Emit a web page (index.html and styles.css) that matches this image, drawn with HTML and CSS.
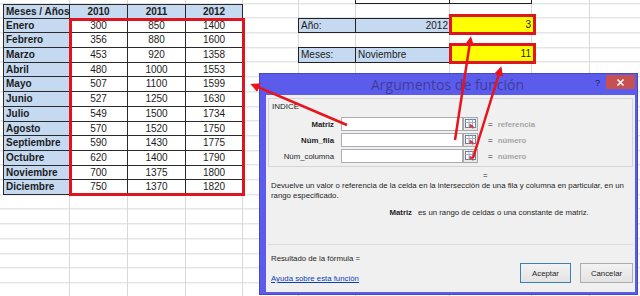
FILE: index.html
```html
<!DOCTYPE html>
<html>
<head>
<meta charset="utf-8">
<link rel="stylesheet" href="styles.css">
</head>
<body>

<div class="sheet">
  <div class="stub stub-left"></div>
  <div class="stub stub-right"></div>

  <div class="table">
    <div class="cell head first">Meses / Años</div>
    <div class="cell head">2010</div>
    <div class="cell head">2011</div>
    <div class="cell head">2012</div>

    <div class="cell month">Enero</div><div class="cell">300</div><div class="cell">850</div><div class="cell">1400</div>
    <div class="cell month">Febrero</div><div class="cell">356</div><div class="cell">880</div><div class="cell">1600</div>
    <div class="cell month">Marzo</div><div class="cell">453</div><div class="cell">920</div><div class="cell">1358</div>
    <div class="cell month">Abril</div><div class="cell">480</div><div class="cell">1000</div><div class="cell">1553</div>
    <div class="cell month">Mayo</div><div class="cell">507</div><div class="cell">1100</div><div class="cell">1599</div>
    <div class="cell month">Junio</div><div class="cell">527</div><div class="cell">1250</div><div class="cell">1630</div>
    <div class="cell month">Julio</div><div class="cell">549</div><div class="cell">1500</div><div class="cell">1734</div>
    <div class="cell month">Agosto</div><div class="cell">570</div><div class="cell">1520</div><div class="cell">1750</div>
    <div class="cell month">Septiembre</div><div class="cell">590</div><div class="cell">1430</div><div class="cell">1775</div>
    <div class="cell month">Octubre</div><div class="cell">620</div><div class="cell">1400</div><div class="cell">1790</div>
    <div class="cell month">Noviembre</div><div class="cell">700</div><div class="cell">1375</div><div class="cell">1800</div>
    <div class="cell month">Diciembre</div><div class="cell">750</div><div class="cell">1370</div><div class="cell">1820</div>
  </div>
  <div class="selection"></div>

  <div class="box label year-row">Año:</div>
  <div class="box value year-row num">2012</div>
  <div class="result year-row">3</div>

  <div class="box label month-row">Meses:</div>
  <div class="box value month-row">Noviembre</div>
  <div class="result month-row">11</div>

  <!-- function arguments window -->
  <div class="dialog">
    <div class="titlebar">
      <span class="title">Argumentos de función</span>
      <span class="help">?</span>
      <span class="close">
        <svg width="9" height="9" viewBox="0 0 9 9"><path d="M1.5 1.5l6 6M7.5 1.5l-6 6" stroke="#fff" stroke-width="1.6"/></svg>
      </span>
    </div>

    <div class="client">
      <div class="group">
        <div class="group-name">INDICE</div>
        <div class="args">
          <span class="arg-label bold">Matriz</span>
          <span class="arg-input"></span>
          <span class="picker">
            <svg width="11" height="10" viewBox="0 0 11 10"><rect x="0.5" y="0.5" width="10" height="8" fill="#fff" stroke="#6b7fa3"/><path d="M0.5 3.5h10M4 0.5v8M7.5 0.5v8" stroke="#9fb0cc"/><path d="M4.5 4.5l5 3h-2l1 2h-1.2l-1-2-1.8 1.4z" fill="#d0302a"/></svg>
          </span>
          <span class="arg-value">= <b>referencia</b></span>

          <span class="arg-label bold">Núm_fila</span>
          <span class="arg-input"></span>
          <span class="picker">
            <svg width="11" height="10" viewBox="0 0 11 10"><rect x="0.5" y="0.5" width="10" height="8" fill="#fff" stroke="#6b7fa3"/><path d="M0.5 3.5h10M4 0.5v8M7.5 0.5v8" stroke="#9fb0cc"/><path d="M4.5 4.5l5 3h-2l1 2h-1.2l-1-2-1.8 1.4z" fill="#d0302a"/></svg>
          </span>
          <span class="arg-value">= <b>número</b></span>

          <span class="arg-label">Núm_columna</span>
          <span class="arg-input"></span>
          <span class="picker">
            <svg width="11" height="10" viewBox="0 0 11 10"><rect x="0.5" y="0.5" width="10" height="8" fill="#fff" stroke="#6b7fa3"/><path d="M0.5 3.5h10M4 0.5v8M7.5 0.5v8" stroke="#9fb0cc"/><path d="M4.5 4.5l5 3h-2l1 2h-1.2l-1-2-1.8 1.4z" fill="#d0302a"/></svg>
          </span>
          <span class="arg-value">= <b>número</b></span>
        </div>
      </div>

      <div class="equals">=</div>
      <div class="desc">Devuelve un valor o referencia de la celda en la intersección de una fila y columna en particular, en un<br>rango especificado.</div>
      <div class="arg-help">
        <span class="arg-help-name">Matriz</span>
        <span>es un rango de celdas o una constante de matriz.</span>
      </div>

      <div class="separator"></div>

      <div class="footer">
        <div class="footer-text">
          <div>Resultado de la fórmula =</div>
          <a class="help-link" href="#">Ayuda sobre esta función</a>
        </div>
        <div class="buttons">
          <button class="btn default">Aceptar</button>
          <button class="btn">Cancelar</button>
        </div>
      </div>
    </div>
  </div>

  <svg class="arrows" width="640" height="296" viewBox="0 0 640 296">
    <defs>
      <marker id="head" viewBox="0 0 10 10" refX="7" refY="5" markerWidth="3.8" markerHeight="3.8" orient="auto">
        <path d="M0 0L10 5L0 10z" fill="#e8131b"/>
      </marker>
    </defs>
    <line x1="347" y1="125" x2="253" y2="85" stroke="#e8131b" stroke-width="2.5" marker-end="url(#head)"/>
    <line x1="455" y1="140" x2="470.5" y2="39" stroke="#e8131b" stroke-width="2.5" marker-end="url(#head)"/>
    <line x1="473" y1="158" x2="500.5" y2="69" stroke="#e8131b" stroke-width="2.5" marker-end="url(#head)"/>
  </svg>
</div>

</body>
</html>
```

FILE: styles.css
```css
body {
  margin: 0;
  width: 640px;
  height: 296px;
  overflow: hidden;
  background: #fff;
  font-family: "Liberation Sans", Arial, sans-serif;
}

/* the worksheet: columns and row lines drawn as background */
.sheet {
  position: relative;
  height: 296px;
  display: grid;
  grid-template-columns: 3px 67px 58px 58px 57px 56px 57px 94px 82px 58px 50px;
  grid-template-rows: 4px repeat(20, 14.7px);
  font-size: 10px;
  color: #1c1c1c;
  background:
    linear-gradient(to right,
      transparent 0 69px, #d9d9d9 69px 70px,
      transparent 70px 127px, #d9d9d9 127px 128px,
      transparent 128px 185px, #d9d9d9 185px 186px,
      transparent 186px 242px, #d9d9d9 242px 243px,
      transparent 243px 298px, #d9d9d9 298px 299px,
      transparent 299px 355px, #d9d9d9 355px 356px,
      transparent 356px 449px, #d9d9d9 449px 450px,
      transparent 450px 531px, #d9d9d9 531px 532px,
      transparent 532px 589px, #d9d9d9 589px 590px,
      transparent 590px),
    repeating-linear-gradient(to bottom,
      transparent 0, transparent 13.7px,
      #d9d9d9 13.7px, #d9d9d9 14.7px) 0 -10.7px;
}

.stub {
  grid-row: 1;
  border-right: 1px solid #222;
  border-bottom: 1px solid #222;
  background: #fff;
}

.stub-left {
  grid-column: 8;
  border-left: 1px solid #222;
  margin-left: -1px;
}

.stub-right {
  grid-column: 9;
}

/* data table */
.table {
  grid-column: 2 / 6;
  grid-row: 2 / 15;
  display: grid;
  grid-template-columns: 67px 58px 58px 57px;
  grid-auto-rows: 14.7px;
}

.cell {
  box-sizing: border-box;
  background: #fff;
  border-right: 1px solid #2a2a2a;
  border-bottom: 1px solid #2a2a2a;
  line-height: 14px;
  text-align: center;
  white-space: nowrap;
}

.head {
  background: #c5d9f1;
  border-top: 1px solid #2a2a2a;
  font-weight: bold;
  line-height: 13px;
}

.month,
.first {
  background: #c5d9f1;
  border-left: 1px solid #2a2a2a;
  font-weight: bold;
  text-align: left;
  padding-left: 2px;
}

.selection {
  grid-column: 3 / 6;
  grid-row: 3 / 15;
  margin: -1px -2px -1px -1px;
  border: 3px solid #e0141e;
}

/* lookup cells */
.year-row { grid-row: 3; }
.month-row { grid-row: 5; }

.box {
  box-sizing: border-box;
  background: #c5d9f1;
  border: 1px solid #222;
  border-left: none;
  margin-top: -1px;
  line-height: 14px;
  padding: 0 2px;
}

.label {
  grid-column: 7;
  border-left: 1px solid #222;
  margin-left: -1px;
}

.value {
  grid-column: 8;
}

.num {
  text-align: right;
  padding-right: 1px;
}

.result {
  grid-column: 9;
  position: relative;
  z-index: 1;
  margin: -2px -1px 1.5px 2px;
  background: #ffff00;
  outline: 3px solid #e0161d;
  text-align: right;
  padding-right: 2px;
  line-height: 15px;
}

/* dialog window */
.dialog {
  position: absolute;
  left: 259px;
  top: 73px;
  width: 379px;
  height: 222px;
  box-sizing: border-box;
  display: flex;
  flex-direction: column;
  padding: 0 2px 2px 6px;
  background: #5c5cec;
  border: 1px solid #4646c9;
  font-size: 7.8px;
  color: #1e1e1e;
  z-index: 2;
}

.titlebar {
  height: 21px;
  display: flex;
  align-items: flex-start;
}

.title {
  flex: 1;
  padding-left: 34px;
  text-align: center;
  font-family: "Open Sans", sans-serif;
  font-size: 14px;
  line-height: 21px;
  color: #3c3c9c;
}

.help {
  width: 11px;
  margin-top: 4px;
  font-size: 9px;
  color: #1c1c5c;
}

.close {
  width: 29px;
  height: 14px;
  margin-top: 1px;
  background: #c75050;
  display: flex;
  align-items: center;
  justify-content: center;
}

.client {
  flex: 1;
  background: #f0f0f0;
  padding: 3px 2px 0 2px;
  display: flex;
  flex-direction: column;
}

.group {
  border: 1px solid #d5d5d5;
  padding: 2px 3px 3px;
}

.group-name {
  line-height: 12px;
  margin-bottom: 4px;
  font-size: 8px;
}

.args {
  display: grid;
  grid-template-columns: 69px 122px 15px 1fr;
  grid-auto-rows: 14px;
  row-gap: 2px;
  align-items: center;
}

.arg-label {
  text-align: right;
  padding-right: 7px;
}

.bold { font-weight: bold; }

.arg-input {
  height: 14px;
  box-sizing: border-box;
  background: #fff;
  border: 1px solid #abadb3;
}

.picker {
  height: 14px;
  box-sizing: border-box;
  background: #e9e9e9;
  border: 1px solid #a8a8a8;
  display: flex;
  align-items: center;
  justify-content: center;
}

.arg-value {
  padding-left: 10px;
  color: #777;
  font-weight: bold;
}

.arg-value b {
  margin-left: 3px;
  color: #a5a5a5;
}

.equals {
  margin-top: 4px;
  padding-left: 215px;
  line-height: 10px;
}

.desc {
  padding-left: 3px;
  line-height: 10px;
  white-space: nowrap;
}

.arg-help {
  display: flex;
  gap: 6px;
  margin-top: 7px;
  line-height: 10px;
}

.arg-help-name {
  width: 144px;
  text-align: right;
  font-weight: bold;
}

.separator {
  margin-top: 26px;
  border-top: 1px solid #dcdcdc;
}

.footer {
  display: flex;
  justify-content: space-between;
  margin-top: 9px;
  padding-left: 3px;
}

.footer-text {
  line-height: 10px;
}

.help-link {
  display: block;
  margin-top: 10px;
  color: #0b3fb8;
  text-decoration: underline;
}

.buttons {
  display: flex;
  gap: 9px;
  margin-top: 9px;
}

.btn {
  height: 20px;
  width: 53px;
  padding: 0;
  font-family: "Liberation Sans", Arial, sans-serif;
  font-size: 7.8px;
  color: #1e1e1e;
  background: linear-gradient(#f2f2f2, #e3e3e3);
  border: 1px solid #acacac;
}

.btn.default {
  width: 51px;
  border-color: #3c7fb1;
}

.arrows {
  position: absolute;
  left: 0;
  top: 0;
  z-index: 3;
  pointer-events: none;
}
```
